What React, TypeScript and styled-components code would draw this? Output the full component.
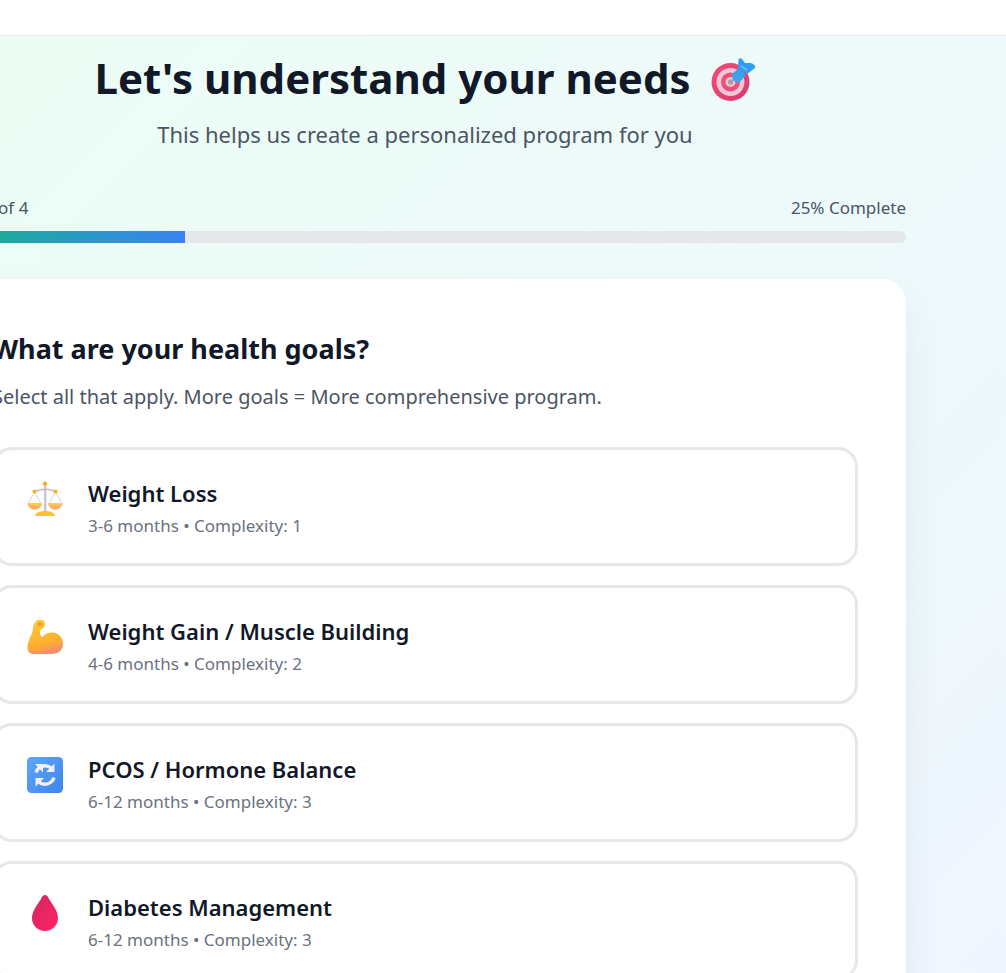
import React from "react";
import styled, { createGlobalStyle } from "styled-components";

const Global = createGlobalStyle`
  html, body { margin: 0; padding: 0; background: #fff; overflow: hidden; }
  body { font-family: "Noto Sans", "Liberation Sans", sans-serif; }
`;

const Viewport = styled.div`
  width: 1006px;
  height: 973px;
  overflow: hidden;
  display: flex;
  flex-direction: column;
`;

const TopBar = styled.header`
  flex: none;
  height: 35px;
  background: #fff;
  border-bottom: 1px solid #e5e7eb;
`;

const Main = styled.main`
  flex: 1;
  min-height: 0;
  background: linear-gradient(135deg, #ecfdf5 0%, #eff6ff 100%);
  padding: 0 100px 0 0;
`;

const Column = styled.div`
  width: 962px;
  margin-left: -56px;
`;

const Intro = styled.section`
  text-align: center;
  padding-top: 13px;
`;

const Title = styled.h1`
  margin: 0;
  height: 58px;
  font-size: 42px;
  line-height: 58px;
  font-weight: 700;
  color: #111827;
  display: flex;
  justify-content: center;
  align-items: center;
  gap: 20px;
`;

const Subtitle = styled.p`
  margin: 12px 0 0;
  font-size: 22px;
  line-height: 30px;
  color: #4b5563;
`;

const ProgressHead = styled.div`
  margin-top: 47px;
  display: flex;
  justify-content: space-between;
  font-size: 17px;
  line-height: 24px;
  color: #4b5563;
`;

const Track = styled.div`
  margin-top: 11px;
  height: 12px;
  border-radius: 6px;
  background: #e5e7eb;
  overflow: hidden;
`;

const Fill = styled.div`
  height: 100%;
  background: linear-gradient(90deg, #10b981, #3b82f6);
`;

const Card = styled.section`
  margin-top: 36px;
  background: #fff;
  border-radius: 24px;
  padding: 48px;
  box-shadow: 0 20px 40px rgba(0, 0, 0, 0.06);
`;

const Question = styled.h2`
  margin: 0;
  font-size: 27px;
  line-height: 44px;
  font-weight: 700;
  color: #111827;
`;

const Hint = styled.p`
  margin: 12px 0 0;
  font-size: 20px;
  line-height: 28px;
  color: #4b5563;
`;

const Options = styled.div`
  margin-top: 36px;
  display: flex;
  flex-direction: column;
  gap: 19px;
`;

const Option = styled.div`
  display: flex;
  align-items: flex-start;
  gap: 25px;
  height: 119px;
  box-sizing: border-box;
  border: 3px solid #e5e7eb;
  border-radius: 20px;
  background: #fff;
  padding: 31px 32px 0;
`;

const IconBox = styled.div`
  flex: none;
  width: 36px;
  height: 36px;
`;

const OptionName = styled.div`
  font-size: 22px;
  line-height: 30px;
  font-weight: 600;
  color: #111827;
  margin-top: -3px;
`;

const OptionMeta = styled.div`
  margin-top: 6px;
  font-size: 17px;
  line-height: 24px;
  color: #6b7280;
`;

const ScaleIcon = () => (
  <svg width="36" height="36" viewBox="0 0 36 36">
    <defs>
      <linearGradient id="pan" x1="0" y1="0" x2="0" y2="1">
        <stop offset="0" stopColor="#ffd24d" />
        <stop offset="1" stopColor="#ff9a6b" />
      </linearGradient>
    </defs>
    <rect x="17" y="3" width="2.4" height="28" fill="#cdc3d6" />
    <path d="M7.5 10.5 L14 8.5 H22 L28.5 10.5" fill="none" stroke="#c4b8cf" strokeWidth="1.6" />
    <path d="M7.5 11 L1.5 22 M7.5 11 L13.5 22 M28.5 11 L22.5 22 M28.5 11 L34.5 22" stroke="#d8cfdf" strokeWidth="1" fill="none" />
    <circle cx="18" cy="2.6" r="2.2" fill="#fdae1b" />
    <circle cx="7.5" cy="10.5" r="2" fill="#fdae1b" />
    <circle cx="28.5" cy="10.5" r="2" fill="#fdae1b" />
    <path d="M0.5 22 H15 C15 26 11.5 28.5 7.7 28.5 C4 28.5 0.5 26 0.5 22Z" fill="url(#pan)" />
    <path d="M21 22 H35.5 C35.5 26 32 28.5 28.2 28.5 C24.5 28.5 21 26 21 22Z" fill="url(#pan)" />
    <path d="M8 35 C8 31.5 13 30 18 30 C23 30 28 31.5 28 35Z" fill="#ffc22e" />
  </svg>
);

const MuscleIcon = () => (
  <svg width="36" height="36" viewBox="0 0 36 36">
    <defs>
      <linearGradient id="arm" x1="0" y1="0" x2="0.2" y2="1">
        <stop offset="0" stopColor="#ffc832" />
        <stop offset="0.75" stopColor="#ffb02e" />
        <stop offset="1" stopColor="#f2906a" />
      </linearGradient>
    </defs>
    <path d="M0.5 29 C0.3 24 3 19 5.5 13 C6.2 9 6 4 10 1.5 C13 0 18 1 18 5 C18 9 14 10.5 13.5 11 C12.5 13 13 18 15.5 18 C18 14.5 21 13.5 25 13.5 C31 13.5 36 18 36 24.5 C36 31.5 31 35 25 35 H7 C3 35 0.7 33 0.5 29Z" fill="url(#arm)" />
    <path d="M11 4 C13 3 16 4 15.5 6 C14 7.5 12.5 6 11 6.5Z" fill="#eb9b2d" />
    <path d="M3 31 L9 21 L15 33Z" fill="#ffa92a" opacity="0.7" />
  </svg>
);

const RefreshIcon = () => (
  <svg width="36" height="36" viewBox="0 0 36 36">
    <defs>
      <linearGradient id="tile" x1="0" y1="0" x2="1" y2="1">
        <stop offset="0" stopColor="#5aa9fb" />
        <stop offset="1" stopColor="#3f83ec" />
      </linearGradient>
    </defs>
    <rect x="0" y="0" width="36" height="36" rx="4.5" fill="url(#tile)" />
    <path d="M9 15.5 C10 11.5 14 8.5 18.5 8.7 C21 8.8 23 9.8 24.6 11.4" fill="none" stroke="#f3eefc" strokeWidth="3.4" />
    <path d="M27.5 6.5 V15 H19Z" fill="#f3eefc" />
    <path d="M27 20.5 C26 24.5 22 27.5 17.5 27.3 C15 27.2 13 26.2 11.4 24.6" fill="none" stroke="#f3eefc" strokeWidth="3.4" />
    <path d="M8.5 29.5 V21 H17Z" fill="#f3eefc" />
    <path d="M8 7 L16 7 L16 15.5Z" fill="#f3eefc" />
  </svg>
);

const DropIcon = () => (
  <svg width="36" height="36" viewBox="0 0 36 36">
    <defs>
      <linearGradient id="drop" x1="0.1" y1="0.2" x2="0.8" y2="1">
        <stop offset="0" stopColor="#d6275f" />
        <stop offset="1" stopColor="#ff2266" />
      </linearGradient>
    </defs>
    <path d="M18 0 C20 0 20.8 1.6 21.8 3.4 C24 7.6 31 15 31 23 C31 30.4 25.2 36 18 36 C10.8 36 5 30.4 5 23 C5 15 12 7.6 14.2 3.4 C15.2 1.6 16 0 18 0Z" fill="url(#drop)" />
  </svg>
);

const TargetIcon = () => (
  <svg width="45" height="45" viewBox="0 0 45 45">
    <defs>
      <linearGradient id="ring" x1="0" y1="0" x2="1" y2="1">
        <stop offset="0" stopColor="#f8497a" />
        <stop offset="1" stopColor="#d83a6c" />
      </linearGradient>
      <linearGradient id="dart" x1="0" y1="1" x2="1" y2="0">
        <stop offset="0" stopColor="#44a9e8" />
        <stop offset="1" stopColor="#2f9cf2" />
      </linearGradient>
    </defs>
    <circle cx="19.5" cy="26" r="19" fill="url(#ring)" />
    <circle cx="19.5" cy="26" r="14" fill="#f1c6d6" />
    <circle cx="19.5" cy="26" r="9.5" fill="#ed4f7d" />
    <circle cx="19.5" cy="26" r="5" fill="#f2c5d3" />
    <circle cx="19.5" cy="26" r="2.6" fill="#a99ea7" />
    <path d="M21 25 L30 16" stroke="#8fa2b5" strokeWidth="1.5" />
    <path d="M21 18 L28 12 L35 19 L29 26 C25 28 20 24 21 18Z" fill="url(#dart)" />
    <path d="M27 12 L27.5 4 C28 2 30 2 31 3 L34 7 L39 7 C42 7 45 10 44 12 L36 18 Z" fill="#2f9ef3" />
    <path d="M30 10 L36 14" stroke="#7cc6f5" strokeWidth="1.4" />
  </svg>
);

const goals = [
  { name: "Weight Loss", meta: "3-6 months • Complexity: 1", icon: <ScaleIcon /> },
  { name: "Weight Gain / Muscle Building", meta: "4-6 months • Complexity: 2", icon: <MuscleIcon /> },
  { name: "PCOS / Hormone Balance", meta: "6-12 months • Complexity: 3", icon: <RefreshIcon /> },
  { name: "Diabetes Management", meta: "6-12 months • Complexity: 3", icon: <DropIcon /> },
];

export default function App() {
  return (
    <Viewport>
      <Global />
      <TopBar />
      <Main>
        <Column>
          <Intro>
            <Title>
              <span>Let's understand your needs</span>
              <TargetIcon />
            </Title>
            <Subtitle>This helps us create a personalized program for you</Subtitle>
          </Intro>
          <ProgressHead>
            <span>Step 1 of 4</span>
            <span>25% Complete</span>
          </ProgressHead>
          <Track>
            <Fill style={{ width: "25%" }} />
          </Track>
          <Card>
            <Question>What are your health goals?</Question>
            <Hint>Select all that apply. More goals = More comprehensive program.</Hint>
            <Options>
              {goals.map((g) => (
                <Option key={g.name}>
                  <IconBox>{g.icon}</IconBox>
                  <div>
                    <OptionName>{g.name}</OptionName>
                    <OptionMeta>{g.meta}</OptionMeta>
                  </div>
                </Option>
              ))}
            </Options>
          </Card>
        </Column>
      </Main>
    </Viewport>
  );
}
